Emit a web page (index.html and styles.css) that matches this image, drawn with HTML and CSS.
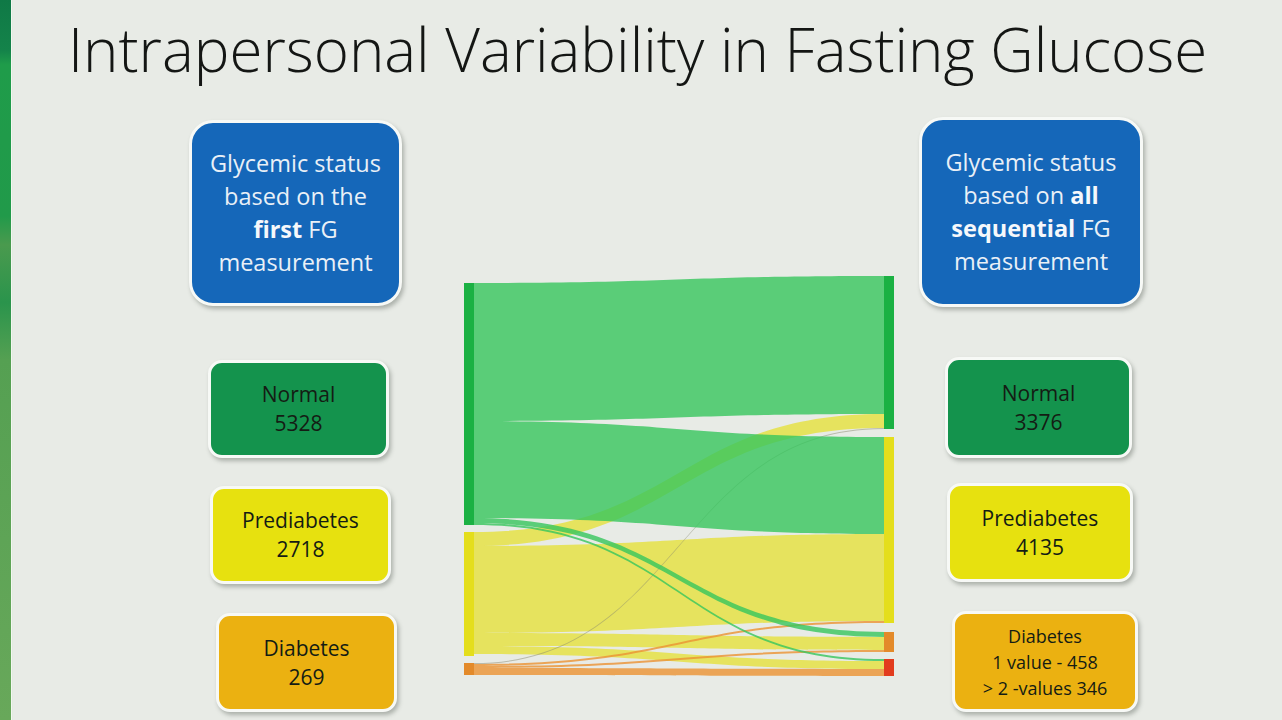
FILE: index.html
```html
<!DOCTYPE html>
<html lang="en">
<head>
<meta charset="utf-8">
<title>Intrapersonal Variability in Fasting Glucose</title>
<link rel="stylesheet" href="styles.css">
</head>
<body>
<div class="page">
  <div class="strip"></div>
  <main class="slide">
    <h1 class="title">Intrapersonal Variability in Fasting Glucose</h1>
    <div class="stage">
      <section class="col col-left">
        <div class="head head-l"><p class="txt">Glycemic status<br>based on the<br><b>first</b> FG<br>measurement</p></div>
        <div class="status normal l-normal"><p class="txt">Normal<br>5328</p></div>
        <div class="status pre l-pre"><p class="txt">Prediabetes<br>2718</p></div>
        <div class="status dia l-dia"><p class="txt">Diabetes<br>269</p></div>
      </section>

      <svg class="sankey" width="430" height="400" viewBox="0 0 430 400" xmlns="http://www.w3.org/2000/svg">
        <g class="flows-y">
          <path d="M10,256 C215,256 215,138 420,138 L420,152 C215,152 215,270 10,270 Z"/>
          <path d="M10,270 C215,270 215,258 420,258 L420,345 C215,345 215,357 10,357 Z"/>
          <path d="M10,357 C215,357 215,361 420,361 L420,374 C215,374 215,370 10,370 Z"/>
          <path d="M10,370 C215,370 215,385 420,385 L420,393 C215,393 215,378 10,378 Z"/>
        </g>
        <g class="flows-o">
          <path class="faint" d="M10,387 C215,387 215,152 420,152 L420,153 C215,153 215,388 10,388 Z"/>
          <path d="M10,388 C215,388 215,345 420,345 L420,347 C215,347 215,390 10,390 Z"/>
          <path d="M10,390 C215,390 215,374 420,374 L420,376 C215,376 215,392 10,392 Z"/>
          <path d="M10,392 C215,392 215,393 420,393 L420,400 C215,400 215,399 10,399 Z"/>
        </g>
        <g class="flows-g">
          <path d="M10,7 C215,7 215,0 420,0 L420,138 C215,138 215,145 10,145 Z"/>
          <path d="M10,145 C215,145 215,161 420,161 L420,258 C215,258 215,242 10,242 Z"/>
          <path d="M10,242 C215,242 215,356 420,356 L420,361 C215,361 215,247 10,247 Z"/>
          <path d="M10,247 C215,247 215,383 420,383 L420,385 C215,385 215,249 10,249 Z"/>
        </g>
        <g class="nodes">
          <rect class="n-green" x="0" y="7" width="10" height="242"/>
          <rect class="n-yellow" x="0" y="256" width="10" height="124"/>
          <rect class="n-orange" x="0" y="387" width="10" height="12"/>
          <rect class="n-green" x="420" y="0" width="10" height="153"/>
          <rect class="n-yellow" x="420" y="161" width="10" height="186"/>
          <rect class="n-orange" x="420" y="356" width="10" height="20"/>
          <rect class="n-red" x="420" y="383" width="10" height="17"/>
        </g>
      </svg>

      <section class="col col-right">
        <div class="head head-r"><p class="txt">Glycemic status<br>based on <b>all</b><br><b>sequential</b> FG<br>measurement</p></div>
        <div class="status normal r-normal"><p class="txt">Normal<br>3376</p></div>
        <div class="status pre r-pre"><p class="txt">Prediabetes<br>4135</p></div>
        <div class="status dia r-dia small"><p class="txt">Diabetes<br>1 value - 458<br>&gt; 2 -values 346</p></div>
      </section>
    </div>
  </main>
</div>
</body>
</html>
```

FILE: styles.css
```css
html, body {
  margin: 0;
  padding: 0;
}

body {
  background: #e8ebe6;
  overflow: hidden;
  font-family: "Open Sans", "Noto Sans", sans-serif;
}

.page {
  display: flex;
  width: 1282px;
  height: 720px;
}

.strip {
  flex: none;
  width: 11px;
  height: 720px;
  background: linear-gradient(180deg, #0f7946 0%, #14834a 7%, #1f9c4a 9%, #219a4a 30%, #4a9a4e 34%, #2a944c 42%, #55a052 50%, #5ea456 75%, #68a85a 100%);
  box-shadow: 1px 0 0 #f3f7f1, 2px 0 0 #e2ebe0;
}

.slide {
  flex: 1;
  display: flex;
  flex-direction: column;
}

.title {
  margin: 0;
  height: 60px;
  padding: 19px 0 0 57px;
  font-family: "Open Sans", "Noto Sans", sans-serif;
  font-weight: 300;
  font-size: 60px;
  line-height: 60px;
  letter-spacing: 0;
  color: #141614;
  white-space: nowrap;
}

.stage {
  display: flex;
  align-items: flex-start;
  margin-top: 38px;
  padding-left: 178px;
}

.col {
  display: flex;
  flex-direction: column;
  align-items: flex-start;
  flex: none;
}

.col-left {
  width: 213px;
}

.col-right {
  width: 230px;
  margin-left: 25px;
}

.sankey {
  flex: none;
  display: block;
  margin-left: 62px;
  margin-top: 159px;
}

.txt {
  margin: 0;
}

.head {
  box-sizing: border-box;
  display: flex;
  align-items: center;
  justify-content: center;
  text-align: center;
  background: #1567b9;
  color: #e9f0f7;
  border: 3px solid #f7f9f6;
  border-radius: 24px;
  box-shadow: 2px 3px 4px rgba(60, 70, 60, 0.35);
  font-size: 23.5px;
  line-height: 33px;
  white-space: nowrap;
}

.head b {
  font-weight: 700;
  color: #f6f8fb;
}

.head-l {
  width: 213px;
  height: 186px;
  margin-top: 3px;
}

.head-r {
  width: 224px;
  height: 190px;
}

.status {
  box-sizing: border-box;
  display: flex;
  align-items: center;
  justify-content: center;
  text-align: center;
  color: #141c14;
  border: 3px solid #f7f9f6;
  border-radius: 14px;
  box-shadow: 2px 3px 4px rgba(60, 70, 60, 0.35);
  font-size: 21px;
  line-height: 29px;
  white-space: nowrap;
}

.status.small {
  font-size: 18px;
  line-height: 26px;
}

.normal { background: #14934d; }
.pre { background: #e7e10f; }
.dia { background: #ebb111; }

.l-normal { width: 181px; height: 98px; margin: 54px 0 0 19px; }
.l-pre    { width: 181px; height: 98px; margin: 28px 0 0 21px; }
.l-dia    { width: 181px; height: 99px; margin: 29px 0 0 27px; }

.r-normal { width: 187px; height: 101px; margin: 50px 0 0 26px; }
.r-pre    { width: 186px; height: 99px;  margin: 25px 0 0 28px; }
.r-dia    { width: 186px; height: 101px; margin: 29px 0 0 33px; }

.flows-y path { fill: #e5e13c; fill-opacity: 0.8; }
.flows-o path { fill: #eb9232; fill-opacity: 0.8; }
.flows-o path.faint { fill: #8a8a70; fill-opacity: 0.5; }
.flows-g path { fill: #36c55c; fill-opacity: 0.8; }

.n-green  { fill: #1bb143; }
.n-yellow { fill: #e4de1c; }
.n-orange { fill: #e38a2a; }
.n-red    { fill: #e23c1e; }
```
